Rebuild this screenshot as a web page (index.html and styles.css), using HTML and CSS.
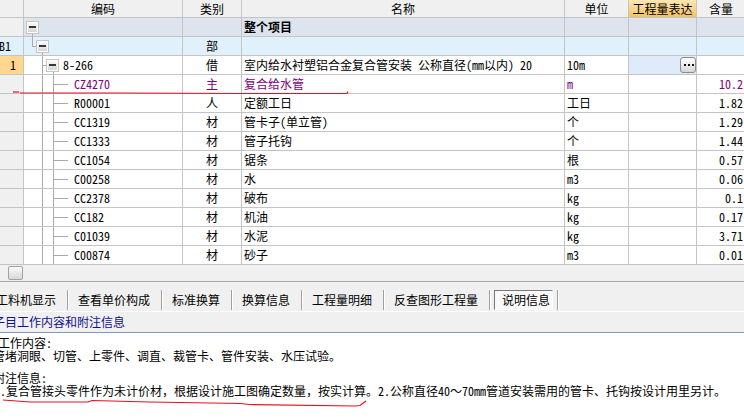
FILE: index.html
```html
<!DOCTYPE html>
<html lang="zh-CN">
<head>
    <meta charset="UTF-8">
    <title>说明信息</title>
    <link rel="stylesheet" href="styles.css">
</head>
<body>
    <div class="grid">
        <div class="row head">
            <div></div>
            <div class="c">编码</div>
            <div class="c">类别</div>
            <div class="c">名称</div>
            <div class="c">单位</div>
            <div class="c hl">工程量表达</div>
            <div class="c">含量</div>
        </div>
        <div class="row root">
            <div class="no"></div>
            <div class="code t-root"><span class="exp"></span></div>
            <div class="c"></div>
            <div class="name bold">整个项目</div>
            <div></div><div></div><div></div>
        </div>
        <div class="row group">
            <div class="no b1">B1</div>
            <div class="code t-group"><span class="exp"></span></div>
            <div class="c">部</div>
            <div class="name"></div>
            <div></div><div></div><div></div>
        </div>
        <div class="row item">
            <div class="no cur">1</div>
            <div class="code t-item"><span class="exp"></span><span class="txt">8-266</span></div>
            <div class="c">借</div>
            <div class="name">室内给水衬塑铝合金复合管安装 公称直径(mm以内) 20</div>
            <div class="unit">10m</div>
            <div class="expr"><span class="more"></span></div>
            <div class="qty"></div>
        </div>
        <div class="row main">
            <div class="no"></div>
            <div class="code t-leaf">CZ4270</div>
            <div class="c">主</div>
            <div class="name">复合给水管</div>
            <div class="unit">m</div>
            <div></div>
            <div class="qty">10.2</div>
        </div>
        <div class="row">
            <div class="no"></div>
            <div class="code t-leaf">R00001</div>
            <div class="c">人</div>
            <div class="name">定额工日</div>
            <div class="unit">工日</div>
            <div></div>
            <div class="qty">1.82</div>
        </div>
        <div class="row">
            <div class="no"></div>
            <div class="code t-leaf">CC1319</div>
            <div class="c">材</div>
            <div class="name">管卡子(单立管)</div>
            <div class="unit">个</div>
            <div></div>
            <div class="qty">1.29</div>
        </div>
        <div class="row">
            <div class="no"></div>
            <div class="code t-leaf">CC1333</div>
            <div class="c">材</div>
            <div class="name">管子托钩</div>
            <div class="unit">个</div>
            <div></div>
            <div class="qty">1.44</div>
        </div>
        <div class="row">
            <div class="no"></div>
            <div class="code t-leaf">CC1054</div>
            <div class="c">材</div>
            <div class="name">锯条</div>
            <div class="unit">根</div>
            <div></div>
            <div class="qty">0.57</div>
        </div>
        <div class="row">
            <div class="no"></div>
            <div class="code t-leaf">C00258</div>
            <div class="c">材</div>
            <div class="name">水</div>
            <div class="unit">m3</div>
            <div></div>
            <div class="qty">0.06</div>
        </div>
        <div class="row">
            <div class="no"></div>
            <div class="code t-leaf">CC2378</div>
            <div class="c">材</div>
            <div class="name">破布</div>
            <div class="unit">kg</div>
            <div></div>
            <div class="qty">0.1</div>
        </div>
        <div class="row">
            <div class="no"></div>
            <div class="code t-leaf">CC182</div>
            <div class="c">材</div>
            <div class="name">机油</div>
            <div class="unit">kg</div>
            <div></div>
            <div class="qty">0.17</div>
        </div>
        <div class="row">
            <div class="no"></div>
            <div class="code t-leaf">C01039</div>
            <div class="c">材</div>
            <div class="name">水泥</div>
            <div class="unit">kg</div>
            <div></div>
            <div class="qty">3.71</div>
        </div>
        <div class="row">
            <div class="no"></div>
            <div class="code t-leaf">C00874</div>
            <div class="c">材</div>
            <div class="name">砂子</div>
            <div class="unit">m3</div>
            <div></div>
            <div class="qty">0.01</div>
        </div>
    </div>

    <div class="hscroll"><span class="thumb"></span></div>

    <div class="tabs">
        <span class="tab">工料机显示</span>
        <span class="tab">查看单价构成</span>
        <span class="tab">标准换算</span>
        <span class="tab">换算信息</span>
        <span class="tab">工程量明细</span>
        <span class="tab">反查图形工程量</span>
        <span class="tab active"><b>说明信息</b></span>
    </div>

    <div class="info-title">子目工作内容和附注信息</div>

    <div class="info-body">
        <p class="first">工作内容:</p>
        <p>管堵洞眼、切管、上零件、调直、裁管卡、管件安装、水压试验。</p>
        <p class="gap">附注信息:</p>
        <p class="note">1.复合管接头零件作为未计价材，根据设计施工图确定数量，按实计算。2.公称直径40～70mm管道安装需用的管卡、托钩按设计用里另计。</p>
    </div>

    <!-- red pen marks drawn over the screenshot -->
    <svg class="marks" width="744" height="418" viewBox="0 0 744 418">
        <path d="M13 92 L19 92" />
        <path d="M20 93 L120 93 L240 93.5 L347 93.5 L348 91.5" />
        <polyline points="3,400 30,402 88,402 92,400.5 150,402 240,403.5 250,404.5 355,406 360,405.5 366,401" />
    </svg>
</body>
</html>
```

FILE: styles.css
```css
body {
    margin: 0;
    width: 744px;
    height: 418px;
    overflow: hidden;
    position: relative;
    background: #fff;
    font-family: "Noto Sans Mono CJK SC", "Noto Sans CJK SC", sans-serif;
    font-size: 12px;
    color: #000;
}

.grid {
    width: 746px;
}

.row {
    display: grid;
    grid-template-columns: 24px 159px 59px 323px 64px 68px 49px;
    height: 19px;
}

.row > div {
    box-sizing: border-box;
    border-right: 1px solid #c4c4c4;
    border-bottom: 1px solid #c4c4c4;
    display: flex;
    align-items: center;
    white-space: nowrap;
    overflow: hidden;
    line-height: 14px;
}

.row .c {
    justify-content: center;
}

.head {
    height: 18px;
    background: #f0f0f0;
}

.head .hl {
    background: linear-gradient(#fde7b4, #f5c262);
}

.root {
    background: #dde4ee;
}

.group {
    background: #e0f1fc;
}

.no {
    background: #f0f0f0;
}

.group .no {
    background: #e0f1fc;
}

.no.b1 {
    text-indent: -1px;
}

.no.cur {
    background: #ffd78e;
    padding-left: 10px;
}

.name {
    padding-left: 2px;
}

.bold {
    font-weight: bold;
}

.unit {
    padding-left: 2px;
}

.qty {
    justify-content: flex-end;
    padding-right: 2px;
}

.item .expr {
    background: #dfeafa;
    justify-content: flex-end;
}

.more {
    width: 16px;
    height: 16px;
    box-sizing: border-box;
    border: 1px solid #8c8c8c;
    border-radius: 3px;
    background: linear-gradient(#ffffff, #d6d6d6);
    display: flex;
    align-items: center;
    justify-content: center;
}

.more::after {
    content: "";
    width: 2px;
    height: 2px;
    margin-left: -6px;
    background: #111;
    box-shadow: 4px 0 #111, 8px 0 #111;
}

.main .code,
.main .c,
.main .name,
.main .unit,
.main .qty {
    color: #800080;
}

/* tree guides, drawn as 1px gradients inside the code cell */
.code {
    --g: #aaaaaa;
}

.t-root {
    padding-left: 2px;
    background: linear-gradient(var(--g), var(--g)) 8px 15px / 1px 100% no-repeat;
}

.t-group {
    padding-left: 12px;
    background:
        linear-gradient(var(--g), var(--g)) 8px 0 / 1px 9px no-repeat,
        linear-gradient(var(--g), var(--g)) 8px 9px / 4px 1px no-repeat,
        linear-gradient(var(--g), var(--g)) 18px 15px / 1px 100% no-repeat;
}

.t-item {
    padding-left: 22px;
    background:
        linear-gradient(var(--g), var(--g)) 18px 0 / 1px 100% no-repeat,
        linear-gradient(var(--g), var(--g)) 18px 9px / 4px 1px no-repeat,
        linear-gradient(var(--g), var(--g)) 29px 15px / 1px 100% no-repeat;
}

.t-item .txt {
    margin-left: 4px;
}

.t-leaf {
    padding-left: 50px;
    background:
        linear-gradient(var(--g), var(--g)) 18px 0 / 1px 100% no-repeat,
        linear-gradient(var(--g), var(--g)) 29px 0 / 1px 100% no-repeat,
        linear-gradient(var(--g), var(--g)) 29px 9px / 15px 1px no-repeat;
}

.exp {
    flex: none;
    width: 13px;
    height: 13px;
    box-sizing: border-box;
    border: 1px solid #c4c4c4;
    box-shadow: inset 0 0 0 1px #fff;
    background: linear-gradient(#fdfdfd, #d2d2d2);
    display: flex;
    align-items: center;
    justify-content: center;
}

.exp::after {
    content: "";
    width: 7px;
    height: 2px;
    background: #383838;
}

.hscroll {
    height: 16px;
    background: #f0f0f0;
    border-bottom: 1px solid #a8a8a8;
    display: flex;
    align-items: center;
    padding-left: 8px;
}

.thumb {
    width: 15px;
    height: 14px;
    box-sizing: border-box;
    border: 1px solid #a0a0a0;
    border-radius: 2px;
    background: linear-gradient(#fafafa, #d8d8d8);
}

.tabs {
    height: 30px;
    box-sizing: border-box;
    padding-top: 8px;
    margin-left: -14px;
    background: #f0f0f0;
    border-bottom: 1px solid #fff;
    display: flex;
    align-items: flex-start;
    white-space: nowrap;
}

.tab {
    height: 20px;
    line-height: 20px;
    padding: 0 11px 0 10px;
    border-right: 1px solid #a0a0a0;
    box-shadow: 1px 0 #fff;
}

.tab.active {
    padding: 0 4px;
}

.tab.active b {
    display: block;
    font-weight: normal;
    height: 20px;
    box-sizing: border-box;
    line-height: 18px;
    padding: 0 2px 0 7px;
    border: 1px solid #fff;
    border-top-color: #7a7a7a;
    border-left-color: #7a7a7a;
    background: #f9f9f9;
}

.info-title {
    height: 20px;
    line-height: 20px;
    background: #f0f0f0;
    border-bottom: 1px solid #7f9db9;
    color: #101090;
    text-indent: -7px;
    white-space: nowrap;
}

.info-body {
    padding-top: 3px;
    margin-left: -7px;
    white-space: nowrap;
}

.info-body p {
    margin: 0;
    line-height: 13px;
}

.info-body .first {
    padding-left: 5px;
}

.info-body .gap {
    margin-top: 9px;
}

.info-body .note {
    margin-left: 1px;
}

.marks {
    position: absolute;
    left: 0;
    top: 0;
    pointer-events: none;
    fill: none;
    stroke: #e8101c;
    stroke-width: 1.2;
}
```
